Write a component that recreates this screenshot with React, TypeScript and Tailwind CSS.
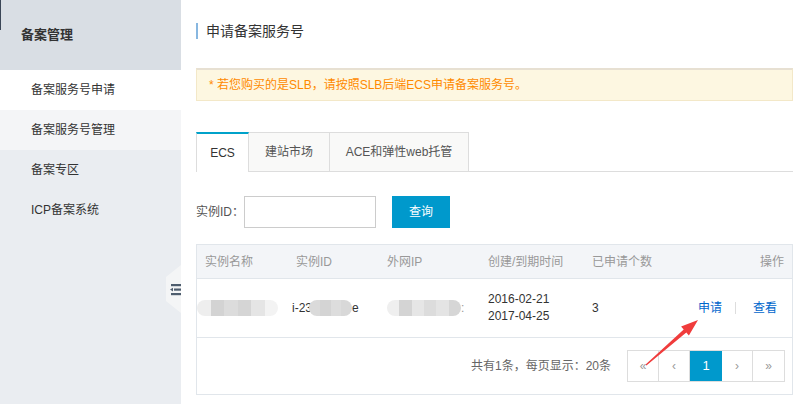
import React from "react";

const font = { fontFamily: '"Liberation Sans", "Noto Sans CJK SC", sans-serif' };

function Blob({ w, segs }: { w: number; segs: string[] }) {
  return (
    <div className="flex h-[16px] overflow-hidden rounded-full" style={{ width: w }}>
      {segs.map((c, i) => (
        <div key={i} className="h-full flex-1" style={{ background: c }} />
      ))}
    </div>
  );
}

export default function App() {
  return (
    <div className="relative flex h-[404px] w-[805px] overflow-hidden bg-white text-[12px] text-[#333]" style={font}>
      {/* Sidebar */}
      <div className="relative flex w-[181px] shrink-0 flex-col bg-[#eaedf1]">
        <div className="absolute left-0 top-0 h-[30px] w-px bg-[#3a4656]" />
        <div className="flex h-[70px] items-center bg-[#d9dee4] pl-[21px] text-[13px] font-bold text-[#333]">备案管理</div>
        <div className="flex h-[40px] items-center bg-white pl-[31px] text-[#333]">备案服务号申请</div>
        <div className="flex h-[40px] items-center bg-[#f4f5f7] pl-[31px] text-[#333]">备案服务号管理</div>
        <div className="flex h-[40px] items-center pl-[31px] text-[#333]">备案专区</div>
        <div className="flex h-[40px] items-center pl-[31px] text-[#333]">ICP备案系统</div>
      </div>

      {/* Toggle */}
      <div className="absolute left-[166px] top-[265px] flex h-[48px] w-[15px] items-center justify-end bg-[#f4f5f6] [clip-path:polygon(0_25%,100%_0,100%_100%,0_75%)]">
        <svg width="11" height="13" viewBox="0 0 11 13">
          <rect x="1" y="1" width="10" height="2.2" fill="#4e5d6e" />
          <rect x="4" y="5.5" width="7" height="2.2" fill="#4e5d6e" />
          <polygon points="0,6.6 3,4.8 3,8.4" fill="#4e5d6e" />
          <rect x="1" y="10" width="10" height="2.2" fill="#4e5d6e" />
        </svg>
      </div>

      {/* Main */}
      <div className="flex flex-1 flex-col pl-[15px] pr-[12px] pt-[23px]">
        <div className="flex h-[16px] items-center border-l-2 border-[#88b7e0] pl-[8px] text-[14px] leading-[16px] text-[#333]">申请备案服务号</div>

        <div className="mt-[29px] flex h-[33px] items-center border border-t-2 border-[#f3e8c8] border-t-[#e7e0d2] bg-[#fdf7e1] pl-[12px] text-[#ff8a00]">
          * 若您购买的是SLB，请按照SLB后端ECS申请备案服务号。
        </div>

        {/* Tabs */}
        <div className="mt-[31px] flex h-[40px] items-stretch">
          <div className="flex w-[53px] items-center justify-center border-l border-r border-t-2 border-[#ddd] border-t-[#00a2ca] bg-white text-[#333]">ECS</div>
          <div className="flex w-[81px] items-center justify-center border-b border-r border-t border-[#ddd] bg-[#f9f9f8] text-[#555]">建站市场</div>
          <div className="flex w-[139px] items-center justify-center border-b border-r border-t border-[#ddd] bg-[#f9f9f8] text-[#555]">ACE和弹性web托管</div>
          <div className="flex-1 border-b border-[#ddd]" />
        </div>

        {/* Search */}
        <div className="mt-[24px] flex h-[32px] items-center">
          <span className="w-[48px] text-[#555]">实例ID：</span>
          <div className="h-[32px] w-[132px] border border-[#ccc] bg-white" />
          <button className="ml-[16px] h-[32px] w-[58px] bg-[#0099cc] text-white">查询</button>
        </div>

        {/* Table */}
        <div className="mt-[16px] flex flex-col border border-[#e1e6eb]">
          <div className="flex h-[34px] items-center border-b border-[#e1e6eb] bg-[#f3f5f8] text-[#999]">
            <div className="w-[91px] pl-[8px]">实例名称</div>
            <div className="w-[91px] pl-[8px]">实例ID</div>
            <div className="w-[101px] pl-[8px]">外网IP</div>
            <div className="w-[104px] pl-[8px]">创建/到期时间</div>
            <div className="w-[94px] pl-[8px]">已申请个数</div>
            <div className="flex-1 pr-[8px] text-right">操作</div>
          </div>
          <div className="flex h-[59px] items-center border-b border-[#e1e6eb] text-[#333]">
            <div className="w-[91px]">
              <Blob w={81} segs={["#eeeeee", "#d3d3d3", "#dcdcdc", "#d5d5d5", "#e5e5e5", "#f3f3f3"]} />
            </div>
            <div className="flex w-[91px] items-center pl-[4px]">
              <span>i-23</span>
              <div className="-ml-[3px]">
                <Blob w={43} segs={["#dadada", "#d4d4d4", "#dddddd", "#d8d8d8"]} />
              </div>
              <span>e</span>
            </div>
            <div className="flex w-[101px] items-center pl-[8px]">
              <Blob w={74} segs={["#efefef", "#d4d4d4", "#e6e6e6", "#dcdcdc", "#e4e4e4", "#d6d6d6"]} />
              <span className="text-[#999]">:</span>
            </div>
            <div className="w-[104px] pl-[8px] leading-[17px]">
              <div>2016-02-21</div>
              <div>2017-04-25</div>
            </div>
            <div className="w-[94px] pl-[8px]">3</div>
            <div className="flex flex-1 items-center justify-end pr-[15px]">
              <span className="text-[#0066cc]">申请</span>
              <span className="mx-[13px] h-[12px] w-px bg-[#ddd]" />
              <span className="ml-[4px] text-[#0066cc]">查看</span>
            </div>
          </div>
          <div className="flex h-[56px] items-center justify-end pr-[7px]">
            <span className="mr-[16px] text-[#666]">共有1条，每页显示：20条</span>
            <div className="flex h-[32px] border border-[#ddd] text-[#999]">
              <div className="flex w-[31px] items-center justify-center border-r border-[#ddd]">«</div>
              <div className="flex w-[31px] items-center justify-center border-r border-[#ddd]">‹</div>
              <div className="flex w-[32px] items-center justify-center bg-[#0099cc] text-[13px] text-white">1</div>
              <div className="flex w-[31px] items-center justify-center border-r border-[#ddd]">›</div>
              <div className="flex w-[31px] items-center justify-center">»</div>
            </div>
          </div>
        </div>
      </div>

      {/* Red arrow annotation */}
      <svg className="pointer-events-none absolute left-0 top-0" width="805" height="404">
        <polygon
          points="645.6,364.6 683.7,329.5 681.1,326.4 698,320 688.9,335.6 686.3,332.5 646.4,365.4"
          fill="#f03c3c"
        />
      </svg>
    </div>
  );
}
